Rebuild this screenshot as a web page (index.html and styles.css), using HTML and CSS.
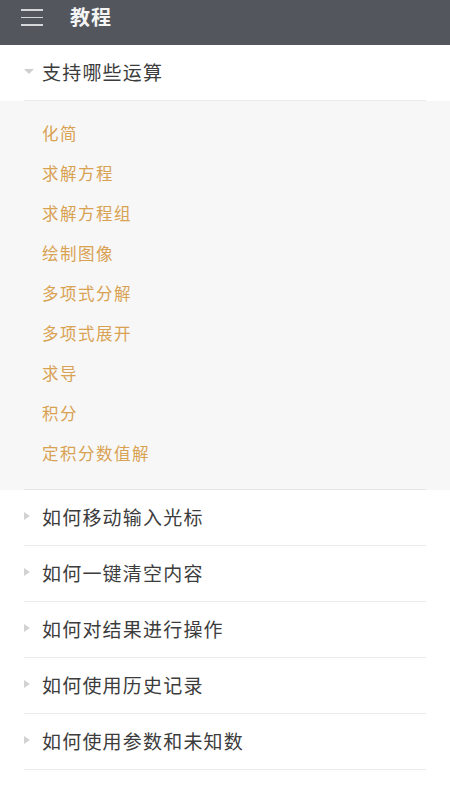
FILE: index.html
```html
<!DOCTYPE html>
<html lang="zh">
<head>
<meta charset="utf-8">
<link rel="stylesheet" href="styles.css">
</head>
<body>
<header class="bar">
  <span class="menu"><i></i><i></i><i></i></span>
  <span class="title">教程</span>
</header>
<main class="list">
  <div class="item open">
    <div class="row"><span class="tri down"></span><span class="label">支持哪些运算</span></div>
    <div class="panel">
      <div class="sub">化简</div>
      <div class="sub">求解方程</div>
      <div class="sub">求解方程组</div>
      <div class="sub">绘制图像</div>
      <div class="sub">多项式分解</div>
      <div class="sub">多项式展开</div>
      <div class="sub">求导</div>
      <div class="sub">积分</div>
      <div class="sub">定积分数值解</div>
    </div>
  </div>
  <div class="item"><div class="row"><span class="tri right"></span><span class="label">如何移动输入光标</span></div></div>
  <div class="item"><div class="row"><span class="tri right"></span><span class="label">如何一键清空内容</span></div></div>
  <div class="item"><div class="row"><span class="tri right"></span><span class="label">如何对结果进行操作</span></div></div>
  <div class="item"><div class="row"><span class="tri right"></span><span class="label">如何使用历史记录</span></div></div>
  <div class="item"><div class="row"><span class="tri right"></span><span class="label">如何使用参数和未知数</span></div></div>
</main>
</body>
</html>
```

FILE: styles.css
```css
* { box-sizing: border-box; }
html, body { margin: 0; padding: 0; background: #fff; }
body { font-family: "Noto Sans CJK SC", "Noto Sans", sans-serif; width: 450px; }

.bar {
  height: 45px;
  background: #53575d;
  display: flex;
  align-items: center;
  padding-left: 21px;
  padding-bottom: 12px;
}
.menu { display: flex; flex-direction: column; gap: 6px; width: 22px; margin-top: 2px; }
.menu i { display: block; height: 1.5px; background: #d4d6d8; }
.title { color: #f4f4f4; font-size: 20px; font-weight: bold; margin-left: 27px; letter-spacing: 1px; line-height: 1; }

.row {
  height: 56px;
  margin: 0 24px;
  border-bottom: 1px solid #ebebeb;
  display: flex;
  align-items: center;
  padding-bottom: 3px;
}
.label { font-size: 19px; letter-spacing: 1.2px; color: #3c3c3c; line-height: 1; }
.tri { width: 0; height: 0; }
.tri.down {
  border-left: 5px solid transparent;
  border-right: 5px solid transparent;
  border-top: 5px solid #cfcfcf;
  margin-right: 8px;
}
.tri.right {
  border-top: 4.5px solid transparent;
  border-bottom: 4.5px solid transparent;
  border-left: 6px solid #d2d2d2;
  margin-right: 12px;
}

.panel {
  background: #f7f7f7;
  padding: 12px 0 17px;
  position: relative;
}
.panel::after {
  content: "";
  position: absolute;
  left: 24px; right: 24px; bottom: 0;
  height: 1px;
  background: #e6e6e6;
}
.sub {
  height: 40px;
  display: flex;
  align-items: center;
  padding-left: 42px;
  font-size: 16.5px;
  letter-spacing: 1.5px;
  color: #d9a252;
}
```
